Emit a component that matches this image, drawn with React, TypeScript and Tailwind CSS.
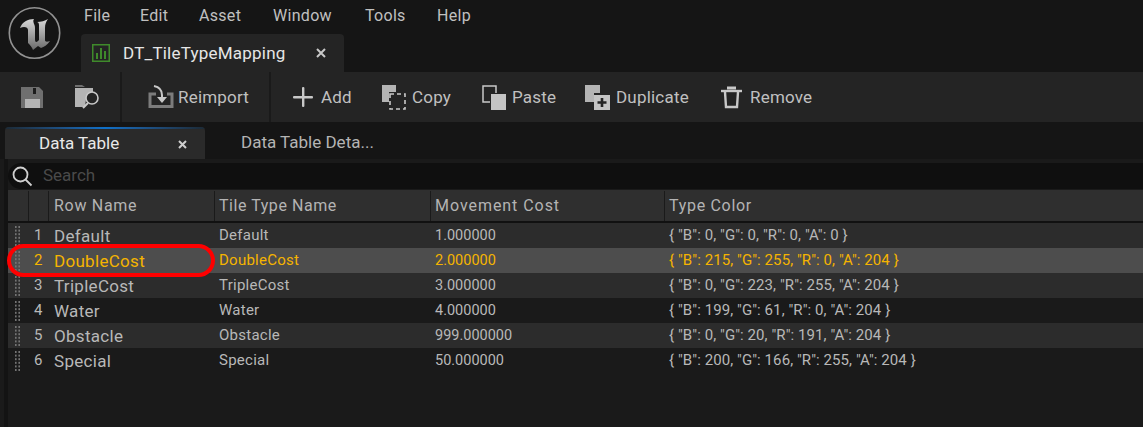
import React from "react";

const rows = [
  { n: 1, name: "Default", cost: "1.000000", color: '{ "B": 0, "G": 0, "R": 0, "A": 0 }', bg: "bg-[#2c2c2c]" },
  { n: 2, name: "DoubleCost", cost: "2.000000", color: '{ "B": 215, "G": 255, "R": 0, "A": 204 }', bg: "bg-[#4d4d4d]", active: true },
  { n: 3, name: "TripleCost", cost: "3.000000", color: '{ "B": 0, "G": 223, "R": 255, "A": 204 }', bg: "bg-[#2c2c2c]" },
  { n: 4, name: "Water", cost: "4.000000", color: '{ "B": 199, "G": 61, "R": 0, "A": 204 }', bg: "bg-[#1a1a1a]" },
  { n: 5, name: "Obstacle", cost: "999.000000", color: '{ "B": 0, "G": 20, "R": 191, "A": 204 }', bg: "bg-[#2c2c2c]" },
  { n: 6, name: "Special", cost: "50.000000", color: '{ "B": 200, "G": 166, "R": 255, "A": 204 }', bg: "bg-[#1a1a1a]" },
];

function Logo() {
  return (
    <svg width="70" height="66" viewBox="0 0 70 66" className="shrink-0">
      <defs>
        <linearGradient id="ue" x1="0" y1="0" x2="0" y2="1">
          <stop offset="0" stopColor="#d8d8d8" />
          <stop offset="1" stopColor="#6a6a6a" />
        </linearGradient>
      </defs>
      <circle cx="34.5" cy="33" r="25.2" fill="none" stroke="#929292" strokeWidth="1.6" />
      <path
        d="M20 28C22 22 28 19 34 19C32 22 35 24 35 28V39C35 42 36 43 38 41L39 40V25C39 23 38 22 37 22C41 22 45 21 48 19C46 22 45 24 45 28V40C45 42 47 42 50 41C47 45 44 47 41 48L38 46L33 50C32 47 30 45 28 43V30C28 27 24 26 20 28Z"
        fill="url(#ue)"
      />
    </svg>
  );
}

function Grip() {
  return (
    <svg width="5" height="20" viewBox="0 0 5 20" className="shrink-0" fill="#747474">
      {[0, 3.6, 7.2, 10.8, 14.4, 18].map((y) => (
        <g key={y}>
          <rect x="0" y={y} width="1.6" height="2" />
          <rect x="3.4" y={y} width="1.6" height="2" />
        </g>
      ))}
    </svg>
  );
}

function ToolButton({ icon, label, className }: { icon: React.ReactNode; label: string; className: string }) {
  return (
    <div className={`flex items-center text-[17px] tracking-[0.2px] text-[#c0c0c0] ${className}`}>
      {icon}
      <span className="pt-[1px]">{label}</span>
    </div>
  );
}

export default function App() {
  return (
    <div className="flex h-[427px] w-[1143px] flex-col overflow-hidden bg-[#151515] font-['Roboto',sans-serif]">
      {/* title area */}
      <div className="flex h-[72px] shrink-0">
        <div className="w-[81px]">
          <Logo />
        </div>
        <div className="flex flex-col">
          <div className="flex h-[34px] pl-[3px] pt-[6px] text-[16px] leading-[20px] tracking-[0.3px] text-[#c0c0c0]">
            <span className="w-[56px]">File</span>
            <span className="w-[59px]">Edit</span>
            <span className="w-[74px]">Asset</span>
            <span className="w-[92px]">Window</span>
            <span className="w-[72px]">Tools</span>
            <span>Help</span>
          </div>
          <div className="flex h-[38px] w-[263px] items-center rounded-t-[4px] bg-[#242424] pl-[11px]">
            <svg width="18" height="18" viewBox="0 0 18 18" className="shrink-0">
              <rect x="0.75" y="0.75" width="16.5" height="16.5" fill="none" stroke="#3f8a2b" strokeWidth="1.5" />
              <rect x="4" y="9" width="2" height="6" fill="#3f8a2b" />
              <rect x="8" y="4" width="2" height="11" fill="#3f8a2b" />
              <rect x="12" y="7" width="2" height="8" fill="#3f8a2b" />
            </svg>
            <span className="ml-[13px] w-[193px] pt-[2px] text-[17px] tracking-[0.22px] text-[#e6e6e6]">DT_TileTypeMapping</span>
            <svg width="10" height="10" viewBox="0 0 10 10" stroke="#c8c8c8" strokeWidth="2">
              <path d="M1 1l8 8M9 1l-8 8" />
            </svg>
          </div>
        </div>
      </div>

      {/* toolbar */}
      <div className="flex h-[50px] shrink-0 items-center bg-[#242424]">
        <div className="ml-[21px] flex w-[101px] items-center self-stretch border-r-2 border-[#1a1a1a] py-[2px]">
          <svg width="23" height="23" viewBox="0 0 23 23" fill="#6f6f6f">
            <path d="M0 1h18l4 4v17H0z" />
            <rect x="12" y="2" width="3" height="6" fill="#1c1c1c" />
            <rect x="4" y="13" width="15" height="9" fill="#b4b4b4" />
          </svg>
          <svg width="28" height="26" viewBox="0 0 28 26" className="ml-[30px]" fill="none">
            <path d="M1 3V1h7l3 2z" fill="#707070" />
            <path d="M1 4h18v4l-7 7 -1 8H1z" fill="#b4b4b4" />
            <circle cx="18" cy="14" r="6" fill="#242424" stroke="#c8c8c8" strokeWidth="1.6" />
            <path d="M14 19l-5 5" stroke="#c8c8c8" strokeWidth="2" />
          </svg>
        </div>
        <ToolButton
          className="ml-[26px] w-[123px] self-stretch border-r-2 border-[#1a1a1a]"
          label="Reimport"
          icon={
            <svg width="26" height="24" viewBox="0 0 26 24" className="mr-[4px]" fill="none">
              <path d="M8 9H2v12.5h22V9h-5" stroke="#7c7c7c" strokeWidth="3" />
              <path d="M6 1c5 1 8 4 8 9v6" stroke="#c8c8c8" strokeWidth="2" />
              <path d="M9 12l5 6 5-6z" fill="#c8c8c8" />
            </svg>
          }
        />
        <ToolButton
          className="ml-[21px] w-[90px]"
          label="Add"
          icon={
            <svg width="22" height="22" viewBox="0 0 22 22" className="mr-[7px]" fill="#c8c8c8">
              <rect x="10" y="1" width="2.4" height="20" rx="1" />
              <rect x="1" y="10" width="20" height="2.4" rx="1" />
            </svg>
          }
        />
        <ToolButton
          className="w-[100px]"
          label="Copy"
          icon={
            <svg width="24" height="25" viewBox="0 0 24 25" className="mr-[6px]" fill="none">
              <path d="M0 0h14v7H7v10H0z" fill="#b4b4b4" />
              <rect x="8" y="9" width="15" height="15" stroke="#c8c8c8" strokeWidth="1.6" strokeDasharray="4 3" />
            </svg>
          }
        />
        <ToolButton
          className="w-[103px]"
          label="Paste"
          icon={
            <svg width="24" height="25" viewBox="0 0 24 25" className="mr-[6px]" fill="none">
              <path d="M14 8V1H1v16h7" stroke="#c8c8c8" strokeWidth="1.5" />
              <rect x="9" y="9" width="15" height="16" fill="#c4c4c4" />
            </svg>
          }
        />
        <ToolButton
          className="w-[136px]"
          label="Duplicate"
          icon={
            <svg width="25" height="25" viewBox="0 0 25 25" className="mr-[6px]">
              <path d="M0 0h15v8H9v9H0z" fill="#b4b4b4" />
              <rect x="9" y="10" width="16" height="15" fill="#c4c4c4" />
              <path d="M17 13v9M12.5 17.5h9" stroke="#242424" strokeWidth="2.6" />
            </svg>
          }
        />
        <ToolButton
          className=""
          label="Remove"
          icon={
            <svg width="21" height="24" viewBox="0 0 21 24" className="mr-[8px]" fill="none" stroke="#c8c8c8">
              <path d="M0 6h21" strokeWidth="2.4" />
              <path d="M6 3h9" strokeWidth="3" />
              <path d="M4 7l1 15h11l1-15" strokeWidth="2.4" />
            </svg>
          }
        />
      </div>

      {/* panel tabs */}
      <div className="mt-[5px] flex h-[32px] shrink-0 pl-[5px]">
        <div className="flex w-[200px] flex-col overflow-hidden rounded-t-[4px] bg-[#2a2a2a]">
          <div className="h-[2px] shrink-0 bg-gradient-to-r from-[#1c2a36] via-[#0e70c8] to-[#1c2a36]" />
          <div className="flex flex-1 items-center pl-[34px] text-[17px] text-[#e8e8e8]">
            <span className="w-[139px]">Data Table</span>
            <svg width="9" height="9" viewBox="0 0 9 9" stroke="#cfcfcf" strokeWidth="2">
              <path d="M1 1l7 7M8 1l-7 7" />
            </svg>
          </div>
        </div>
        <div className="flex items-center pl-[36px] text-[17px] text-[#b4b4b4]">Data Table Deta...</div>
      </div>

      {/* panel body */}
      <div className="flex min-h-0 flex-1 bg-[#1a1a1a] pl-[4px]">
        <div className="flex min-w-0 flex-1 flex-col border-l-4 border-[#131313] pt-[4px]">
          <div className="flex h-[26px] shrink-0 items-center rounded-l-[13px] bg-[#0f0f0f] pl-[3px]">
            <svg width="22" height="22" viewBox="0 0 22 22" fill="none" stroke="#d0d0d0" strokeWidth="1.8">
              <circle cx="9.5" cy="9.5" r="7" />
              <path d="M14.5 14.5l6 6" />
            </svg>
            <span className="ml-[10px] text-[17px] text-[#4a4a4a]">Search</span>
          </div>

          <div className="mt-[1px] flex h-[33px] shrink-0 border-b-2 border-[#111111] bg-[#2f2f2f] pt-[1px] text-[16px] tracking-[0.7px] text-[#b4b4b4]">
            <div className="w-[21px] border-r border-[#1a1a1a]" />
            <div className="w-[20px] border-r border-[#1a1a1a]" />
            <div className="flex w-[166px] items-center border-r border-[#1a1a1a] pl-[5px]">Row Name</div>
            <div className="flex w-[216px] items-center border-r border-[#1a1a1a] pl-[4px] tracking-[0.55px]">Tile Type Name</div>
            <div className="flex w-[234px] items-center border-r border-[#1a1a1a] pl-[4px] tracking-[0.95px]">Movement Cost</div>
            <div className="flex flex-1 items-center pl-[4px]">Type Color</div>
          </div>

          {rows.map((r) => (
            <div
              key={r.n}
              className={`flex h-[25px] shrink-0 items-center text-[15px] tracking-[0.08px] ${r.bg} ${
                r.active ? "text-[#f5b400]" : "text-[#b8b8b8]"
              }`}
            >
              <div className="flex w-[21px] justify-start pl-[7px]">
                <Grip />
              </div>
              <div className="w-[20px] pl-[5px]">{r.n}</div>
              <div className="w-[166px] pl-[5px] pt-[2px] text-[17px] tracking-[0.3px]">{r.name}</div>
              <div className="w-[216px] pl-[4px] tracking-[0.25px]">{r.name}</div>
              <div className="w-[234px] pl-[4px] text-[14.5px] tracking-[0px]">{r.cost}</div>
              <div className="flex-1 pl-[4px]">{r.color}</div>
            </div>
          ))}
        </div>
      </div>

      {/* annotation drawn over the screenshot */}
      <div className="pointer-events-none absolute left-[7px] top-[244px] h-[33px] w-[208px] rounded-full border-[4px] border-[#ff0000]" />
    </div>
  );
}
